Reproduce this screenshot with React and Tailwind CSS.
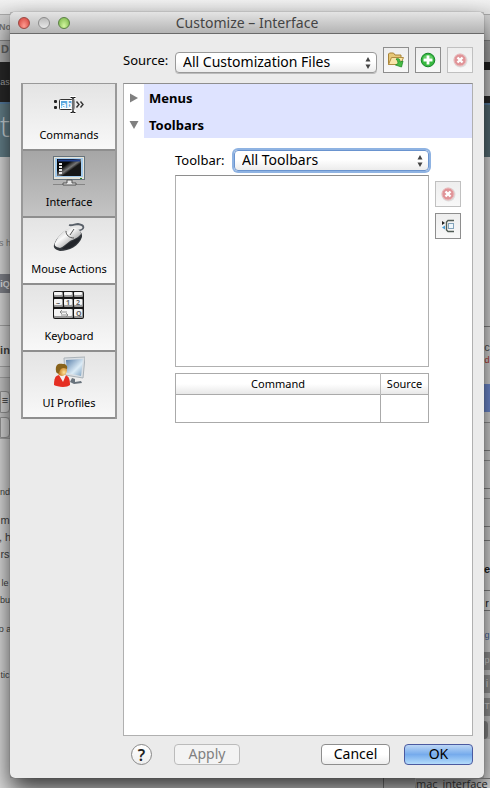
import { useState } from 'react';
import clsx from 'clsx';

// Strips of the page that show on both sides of the dialog
const leftPage = [
    { style: 'h-[2px] bg-[#e6e6e6]' },
    { style: 'h-[26px] border-t border-[#aaa] bg-[#cfcfcf] pt-1 text-[9px] text-[#777] font-bold', text: 'No' },
    { style: 'h-[22px] border-t border-[#888] bg-[#b4b4b4] text-[#666] font-bold', text: 'D' },
    { style: 'h-10 bg-[#292929] pt-3 text-[9px] text-[#aaa]', text: 'as' },
    { style: "h-[55px] border-t-2 border-[#587fa3] bg-[#66828c] pt-[6px] font-['Open_Sans',sans-serif] text-3xl leading-8 font-light text-[#cfd9dd]", text: 't' },
    { style: 'h-[78px] bg-[#dedede]' },
    { style: 'h-[39px] bg-[#dedede] text-[9px] text-[#888]', text: 's h' },
    { style: 'h-[19px] bg-[#85878f] text-[9px] leading-5 font-bold text-[#eee]', text: 'iQ' },
    { style: 'h-8 bg-[#dedede]' },
    { style: 'h-[41px] border-t border-[#aaa] bg-[#dedede] pt-4 font-bold text-[#444]', text: 'in' },
    { style: 'h-3 border-y border-[#aaa] bg-[#d6d6d6]' },
    { style: 'h-[13px] bg-[#ccc]' },
    { style: 'h-[22px] rounded-r border border-[#999] bg-[#ddd] text-[#333]', text: '≡' },
    { style: 'h-1 bg-[#ccc]' },
    { style: 'h-[21px] rounded-r border border-[#999] bg-[#ddd]' },
    { style: 'h-[46px] border-t border-[#aaa] bg-[#dedede]' },
    { style: 'h-7 bg-[#dedede] text-[9px] text-[#444]', text: 'nd' },
    { style: 'h-[17px] bg-[#dedede] text-[#444]', text: 'm' },
    { style: 'h-[17px] bg-[#dedede] text-[#444]', text: ', h' },
    { style: 'h-[29px] bg-[#dedede] text-[#444]', text: 'rs' },
    { style: 'h-[17px] bg-[#dedede] text-[9px] text-[#444]', text: 'le' },
    { style: 'h-[29px] bg-[#dedede] text-[9px] text-[#444]', text: 'bu' },
    { style: 'h-[46px] bg-[#dedede] text-[9px] text-[#444]', text: 'o a' },
    { style: 'grow bg-[#dedede] text-[9px] text-[#444]', text: 'tic' },
];

const rightPage = [
    { style: 'h-[2px] bg-[#e6e6e6]' },
    { style: 'h-[26px] border-t border-[#aaa] bg-[#d2d2d2]' },
    { style: 'h-[22px] border-t border-[#888] bg-[#aaa]' },
    { style: 'h-2 bg-[#222]' },
    { style: 'h-[26px] bg-[#ccc]' },
    { style: 'h-[7px] bg-[#292929]' },
    { style: 'h-[54px] border-t-2 border-[#587fa3] bg-[#587078]' },
    { style: 'h-[169px] bg-[#dedede]' },
    { style: 'h-[26px] border-t border-[#888] bg-[#dedede] pt-3 text-[#555]', text: 'c' },
    { style: 'h-8 bg-[#dedede] text-[9px] text-[#b5382b]', text: 'd' },
    { style: 'h-7 bg-[#7390d8]' },
    { style: 'h-[10px] bg-[#dedede]' },
    { style: 'h-[28px] border-t border-[#999] bg-[#d8d8d8]' },
    { style: 'h-[10px] border-t border-[#888] bg-[#d8d8d8]' },
    { style: 'h-[28px] border-t border-[#999] bg-[#d8d8d8]' },
    { style: 'h-[10px] border-t border-[#888] bg-[#d8d8d8]' },
    { style: 'h-[28px] border-t border-[#999] bg-[#d8d8d8]' },
    { style: 'h-[14px] border-t border-[#888] bg-[#d8d8d8]' },
    { style: 'h-[21px] border-t border-[#888] bg-[#dedede]' },
    { style: 'h-[29px] bg-[#dedede] text-[11px] font-bold text-[#222]', text: 'e' },
    { style: 'h-[21px] border-y border-[#888] bg-[#e4e4e4] pt-1 text-[#222]', text: 'r' },
    { style: 'h-[41px] bg-[#dedede] pt-4 text-[9px] text-[#47689c]', text: 'g' },
    { style: 'h-[18px] bg-[#999] text-[9px] text-[#ddd]', text: 'p' },
    { style: 'h-[5px] bg-[#d0d0d0]' },
    { style: 'h-[18px] bg-[#999] text-[#ddd]', text: 'i' },
    { style: 'h-[5px] bg-[#d0d0d0]' },
    { style: 'h-[18px] bg-[#999] text-[9px] text-[#ddd]', text: 'T' },
    { style: 'h-[5px] bg-[#d0d0d0]' },
    { style: 'h-[18px] mr-[2px] rounded-r bg-[#8c8c8c]' },
    { style: 'grow bg-[#dedede]' },
];

function PageStrip({ rows, className }) {
    return (
        <div className={clsx('flex shrink-0 flex-col overflow-hidden', className)}>
            {rows.map((row, i) => (
                <div key={i} className={clsx('flex shrink-0 justify-center overflow-hidden whitespace-nowrap', row.style)}>
                    {row.text}
                </div>
            ))}
        </div>
    );
}

function CommandsIcon() {
    return (
        <svg width="32" height="32" viewBox="0 0 32 32">
            <rect x="1" y="12" width="3" height="3" rx="1" fill="#222" />
            <rect x="1" y="18" width="3" height="3" rx="1" fill="#222" />
            <rect x="6.5" y="11.500" width="15" height="10" rx="1" fill="#fff" stroke="#333" />
            <rect x="8" y="13" width="11" height="7" fill="#5aa5dc" />
            <text x="8" y="19.500" fontSize="9" fontWeight="bold" fill="#fff">
                ab
            </text>
            <path d="M17 9.500h2l1 1 1-1h2M20 10v13M17 24h2l1-1 1 1h2" fill="none" stroke="#fff" strokeWidth="3" />
            <path d="M17.500 9.500h1.500l1 1 1-1h1.500M20 10v13.500M17.500 24.500h1.500l1-1 1 1h1.500" fill="none" stroke="#111" strokeWidth="1.200" />
            <path d="M23.500 13.500l2.500 3-2.500 3M27.500 13.500l2.500 3-2.500 3" fill="none" stroke="#333" strokeWidth="1.400" />
        </svg>
    );
}

function InterfaceIcon() {
    return (
        <svg width="32" height="32" viewBox="0 0 32 32">
            <defs>
                <linearGradient id="screen" x1="0" y1="0" x2="1" y2="1">
                    <stop offset=".35" stopColor="#090909" />
                    <stop offset=".52" stopColor="#777" />
                    <stop offset=".62" stopColor="#171717" />
                </linearGradient>
            </defs>
            <path d="M0 29.500h32" stroke="#858585" />
            <rect x=".5" y="1.500" width="31" height="23" fill="#e6e4da" stroke="#66737b" />
            <rect x="2" y="3" width="28" height="19" fill="#a3cbed" />
            <rect x="4" y="4" width="24" height="17" fill="url(#screen)" />
            <path d="M5 5.500h22" stroke="#23408c" strokeWidth="2" />
            <path d="M7.500 8v12" stroke="#e8e8e8" strokeWidth="3" strokeDasharray="2 1" />
            <path d="M14 25h5v3h4v2H10v-2h4z" fill="#e8e8e8" stroke="#555" />
            <path d="M27 23.500h2" stroke="#287f32" />
        </svg>
    );
}

function MouseIcon() {
    return (
        <svg width="32" height="32" viewBox="0 0 32 32">
            <defs>
                <linearGradient id="mouse" x1="0" y1="0" x2="1" y2="1">
                    <stop offset="0" stopColor="#aaa" />
                    <stop offset=".4" stopColor="#fafafa" />
                    <stop offset=".8" stopColor="#999" />
                </linearGradient>
            </defs>
            <path d="M23 9c10-1 9-6 2-7-3 0-6 2-9 1" fill="none" stroke="#596069" strokeWidth="1.800" />
            <path d="M1 23c2-7 9-14 15-16 7-2 14 2 13 8-3 9-13 14-22 14-4-1-7-3-6-6z" fill="#34383d" />
            <path d="M2 21C5 14 10 8 17 6c6-1 11 2 11 6-3 4-7 5-11 7-4 3-7 6-10 7-4-1-6-2-5-5z" fill="url(#mouse)" />
            <path d="M13 9c0 4 3 7 8 7M21 7l-4 6" fill="none" stroke="#555" />
            <path d="M9 27c6-6 12-9 19-12-3 7-11 13-19 12z" fill="#22252a" />
        </svg>
    );
}

function KeyboardIcon() {
    const keys = [
        [1, 1, 9, 5], [11, 1, 9, 5], [21, 1, 9, 5],
        [1, 8, 9, 8], [11, 8, 9, 8], [21, 8, 9, 8],
        [1, 18, 19, 9], [21, 18, 9, 9],
    ];
    return (
        <svg width="32" height="32" viewBox="0 -2 32 32">
            <rect width="31" height="28" rx="2" fill="#161616" />
            {keys.map(([x, y, w, h]) => (
                <g key={x + '-' + y}>
                    <rect x={x} y={y} width={w} height={h} rx="1" fill="#999" />
                    <rect x={x} y={y} width={w - 1} height={h - 2} rx="1" fill="#f5f5f5" />
                </g>
            ))}
            <g fontSize="7" fontWeight="bold" fill="#666">
                <text x="3" y="15">~</text>
                <text x="13" y="14">1</text>
                <text x="23" y="14">2</text>
                <text x="23" y="25">Q</text>
            </g>
            <path d="M7 21h7M9 19l-2 2 2 2M8 24h7M13 22l2 2-2 2" fill="none" stroke="#777" strokeWidth=".8" />
        </svg>
    );
}

function ProfilesIcon() {
    return (
        <svg width="32" height="32" viewBox="0 0 32 32">
            <defs>
                <linearGradient id="glass" x1="0" y1="0" x2="1" y2="1">
                    <stop offset="0" stopColor="#567ca7" />
                    <stop offset=".6" stopColor="#dcecf7" />
                    <stop offset="1" stopColor="#789dbe" />
                </linearGradient>
                <radialGradient id="face" cx=".7" cy=".7">
                    <stop offset="0" stopColor="#ffe49a" />
                    <stop offset="1" stopColor="#c77d22" />
                </radialGradient>
            </defs>
            <path d="M11 2l21-1-2 21-18-3z" fill="#dadfe4" stroke="#aab2b8" />
            <path d="M13 4l17-1-2 17-14-3z" fill="url(#glass)" />
            <path d="M19 22l3 1v3l6-1 1 2-8 1-4-2z" fill="#68727b" />
            <path d="M1 29c0-6 1-10 6-10h5c4 1 5 5 5 10-3 3-13 2-16 0z" fill="#e52f23" />
            <path d="M6 19l4 7 3-7z" fill="#f7efef" />
            <ellipse cx="9" cy="14" rx="5" ry="6" fill="url(#face)" />
            <path d="M3 15c-1-7 3-8 7-7 3 0 5 2 4 5-4-2-7-1-8 4-1 1-3 0-3-2z" fill="#88631c" />
        </svg>
    );
}

function FolderIcon() {
    return (
        <svg width="18" height="18" viewBox="0 0 18 18">
            <path d="M1.500 13.500V3l1-1h4l1.500 2h6v9.500z" fill="#e6c777" stroke="#a98438" />
            <path d="M1.500 13.500l3-7h12l-3 7z" fill="#f8e5a9" stroke="#b08c42" />
            <path d="M9 8c3-1 4 0 4 3l3-1-1.500 6L8.500 14l2.500-1.500c0-2-.5-3-2-4.500z" fill="#48bd45" stroke="#238c2a" strokeWidth=".8" />
        </svg>
    );
}

function AddIcon() {
    return (
        <svg width="16" height="16" viewBox="0 0 16 16">
            <circle cx="8" cy="8" r="6.800" fill="#37b83f" stroke="#16852a" />
            <path d="M3 6c1-4 9-4 10 0-2 1-8 1-10 0z" fill="#84db82" opacity=".6" />
            <path d="M8 3.500v9M3.500 8h9" stroke="#fff" strokeWidth="2.800" />
        </svg>
    );
}

function DeleteIcon() {
    return (
        <svg width="16" height="16" viewBox="0 0 16 16">
            <circle cx="8.500" cy="8.500" r="7" fill="#ddd" />
            <circle cx="8" cy="8" r="6" fill="#e09498" stroke="#ecb9bb" />
            <path d="M5.500 5.500l5 5M10.500 5.500l-5 5" stroke="#fff" strokeWidth="2.400" />
        </svg>
    );
}

function DockIcon() {
    return (
        <svg width="16" height="16" viewBox="0 0 16 16">
            <path d="M2 3l3 2-3 2z" fill="#222" />
            <path d="M5 7.500v4L2 9.500z" fill="#469ed8" />
            <path d="M14 2.500H8L6.500 4v8L8 13.500h6" fill="none" stroke="#505c55" strokeWidth="1.400" />
            <rect x="8.500" y="5.500" width="5" height="5" fill="#eef6fb" stroke="#83a4bb" />
        </svg>
    );
}

const tabs = [
    { name: 'Commands', icon: CommandsIcon },
    { name: 'Interface', icon: InterfaceIcon },
    { name: 'Mouse Actions', icon: MouseIcon },
    { name: 'Keyboard', icon: KeyboardIcon },
    { name: 'UI Profiles', icon: ProfilesIcon },
];

function IconButton({ label, disabled, children }) {
    return (
        <button
            aria-label={label}
            disabled={disabled}
            className={clsx(
                'flex size-[26px] shrink-0 items-center justify-center border bg-linear-to-b from-[#eee] to-[#f8f8f8]',
                disabled ? 'border-[#c0c0c0]' : 'border-[#8e8e8e]',
            )}
        >
            {children}
        </button>
    );
}

function Select({ id, option, focused }) {
    return (
        <div className="grid h-[21px] min-w-0 grow items-center">
            <select
                id={id}
                className={clsx(
                    'col-start-1 row-start-1 h-[21px] w-full appearance-none rounded border bg-linear-to-b from-white from-45% to-[#ececec] pr-5 pb-[2px] pl-[7px] text-sm leading-4 outline-none',
                    focused ? 'border-[#6a94cf] ring-2 ring-[#8fb3e2]' : 'border-[#999] shadow-[0_1px_0_#bbb]',
                )}
            >
                <option>{option}</option>
            </select>
            <svg className="pointer-events-none col-start-1 row-start-1 mr-[6px] justify-self-end" width="6" height="12" viewBox="0 0 6 12">
                <path d="M3 0l2.500 4.500h-5zM3 12L.5 7.500h5z" fill="#444" />
            </svg>
        </div>
    );
}

function Section({ title, open, onClick }) {
    return (
        <button onClick={onClick} aria-expanded={open} className="flex h-[27px] w-full items-stretch text-left font-bold">
            <span className="flex w-5 shrink-0 items-center justify-center">
                <svg width="10" height="10" viewBox="0 0 10 10">
                    <path d={open ? 'M.5 1h9L5 9z' : 'M1 .5v9L9 5z'} fill="#808080" />
                </svg>
            </span>
            <span className="flex grow items-center bg-[#dee3ff] pl-[5px]">{title}</span>
        </button>
    );
}

function App() {
    const [tab, setTab] = useState('Interface');
    const [menusOpen, setMenusOpen] = useState(false);
    const [toolbarsOpen, setToolbarsOpen] = useState(true);

    return (
        <div className="flex min-h-screen flex-col overflow-hidden bg-[#c4c4c4] font-['Liberation_Sans',sans-serif] text-[11px] leading-4">
            <div className="h-3 shrink-0 bg-linear-to-b from-[#f1f1f1] to-[#e4e4e4]" />

            <div className="flex grow">
                <PageStrip rows={leftPage} className="w-[10px]" />

                <main className="relative z-10 flex min-w-0 grow flex-col rounded-[5px] bg-[#ebebeb] font-['Noto_Sans',sans-serif] text-[13px] text-black shadow-[0_0_1px_#444,0_12px_24px_rgba(0,0,0,0.75)]">
                    <header className="flex h-[22px] shrink-0 items-center rounded-t-[5px] border-b border-[#6a6a6a] bg-linear-to-b from-[#e4e4e4] to-[#b4b4b4] px-2">
                        <div className="flex flex-1 gap-2">
                            <button aria-label="Close" className="size-3 rounded-full border border-[#9b4741] bg-radial-[at_50%_80%] from-[#ff9d92] to-[#cf3c35]" />
                            <button aria-label="Minimize" className="size-3 rounded-full border border-[#8b8b8b] bg-linear-to-b from-[#bbb] to-[#e8e8e8]" />
                            <button aria-label="Zoom" className="size-3 rounded-full border border-[#5a8043] bg-radial-[at_50%_80%] from-[#d4f7a0] to-[#72b043]" />
                        </div>
                        <h1 className="text-sm text-[#444]">Customize – Interface</h1>
                        <div className="flex-1" />
                    </header>

                    <div className="flex grow flex-col px-[11px] pt-[13px] pb-[13px]">
                        <div className="flex items-end gap-[6px] pl-[102px]">
                            <label htmlFor="source" className="w-[46px] shrink-0 pb-[5px] leading-4">
                                Source:
                            </label>
                            <Select id="source" option="All Customization Files" />
                            <IconButton label="Open file">
                                <FolderIcon />
                            </IconButton>
                            <IconButton label="Add file">
                                <AddIcon />
                            </IconButton>
                            <IconButton label="Remove file" disabled>
                                <DeleteIcon />
                            </IconButton>
                        </div>

                        <div className="mt-[10px] flex grow gap-[6px]">
                            <nav className="w-24 shrink-0 self-start border-x-2 border-t border-[#999] text-[11px]">
                                {tabs.map(({ name, icon: Icon }) => (
                                    <button
                                        key={name}
                                        onClick={() => setTab(name)}
                                        className={clsx(
                                            'flex h-[67px] w-full flex-col items-center border-b-2 border-[#8e8e8e] bg-linear-to-b pt-1',
                                            tab === name ? 'from-[#a6a6a6] to-[#c4c4c4]' : 'from-[#e4e4e4] to-[#f8f8f8]',
                                        )}
                                    >
                                        <span className="h-[39px]">
                                            <Icon />
                                        </span>
                                        <span className="leading-4 whitespace-nowrap">{name}</span>
                                    </button>
                                ))}
                            </nav>

                            <section className="min-w-0 grow border border-[#b0b0b0] border-t-[#8e8e8e] bg-white">
                                <Section title="Menus" open={menusOpen} onClick={() => setMenusOpen(!menusOpen)} />
                                <Section title="Toolbars" open={toolbarsOpen} onClick={() => setToolbarsOpen(!toolbarsOpen)} />

                                {toolbarsOpen && (
                                    <div className="flex gap-[6px] pt-3 pr-[11px] pl-[51px]">
                                        <div className="min-w-0 grow">
                                            <div className="flex items-center">
                                                <label htmlFor="toolbar" className="w-[59px] shrink-0 pb-[2px] leading-4">
                                                    Toolbar:
                                                </label>
                                                <Select id="toolbar" option="All Toolbars" focused />
                                            </div>
                                            <div role="listbox" aria-label="Toolbar items" className="mt-1 h-48 border border-[#b0b0b0] border-t-[#8e8e8e]" />
                                            <table className="mt-[6px] w-full table-fixed border-collapse border border-[#aaa] text-[11px]">
                                                <thead>
                                                    <tr className="h-[21px] border-b border-[#aaa] bg-linear-to-b from-white from-50% to-[#e8e8e8]">
                                                        <th className="border-r border-[#bbb] p-0 text-center font-normal">Command</th>
                                                        <th className="w-12 p-0 text-center font-normal">Source</th>
                                                    </tr>
                                                </thead>
                                                <tbody>
                                                    <tr className="h-7">
                                                        <td className="border-r border-[#aaa]" />
                                                        <td />
                                                    </tr>
                                                </tbody>
                                            </table>
                                        </div>
                                        <div className="flex flex-col gap-[6px] pt-[31px]">
                                            <IconButton label="Delete toolbar" disabled>
                                                <DeleteIcon />
                                            </IconButton>
                                            <IconButton label="Edit toolbar">
                                                <DockIcon />
                                            </IconButton>
                                        </div>
                                    </div>
                                )}
                            </section>
                        </div>

                        <footer className="mt-2 flex h-[21px] items-center pl-[110px] text-sm">
                            <button className="flex size-[21px] items-center justify-center rounded-full border border-[#888] bg-linear-to-b from-white to-[#eee] text-base font-semibold text-[#222]">
                                ?
                            </button>
                            <button disabled className="ml-[22px] h-[21px] w-[66px] rounded border border-[#bbb] bg-[#f3f3f3] pb-[2px] leading-4 text-[#808080]">
                                Apply
                            </button>
                            <div className="ml-auto flex gap-[14px]">
                                <button className="h-[21px] w-[69px] rounded border border-[#8e8e8e] bg-linear-to-b from-white from-50% to-[#eee] pb-[2px] leading-4">
                                    Cancel
                                </button>
                                <button className="h-[21px] w-[69px] rounded border border-[#4b5aa0] bg-linear-to-b from-[#bcd6f5] via-[#76abec] to-[#b4dcfb] pb-[2px] leading-4">
                                    OK
                                </button>
                            </div>
                        </footer>
                    </div>
                </main>

                <PageStrip rows={rightPage} className="w-[6px]" />
            </div>

            <div className="flex h-[10px] shrink-0 bg-[#dedede]">
                <div className="grow border-r border-[#888]" />
                <div className="w-[106px] pl-[31px]">
                    <div className="relative z-20 border-t border-l border-[#666] font-['Open_Sans',sans-serif] text-[11px] leading-[9px] whitespace-nowrap text-[#222]">
                        mac_interface
                    </div>
                </div>
            </div>
        </div>
    );
}

export default App;
